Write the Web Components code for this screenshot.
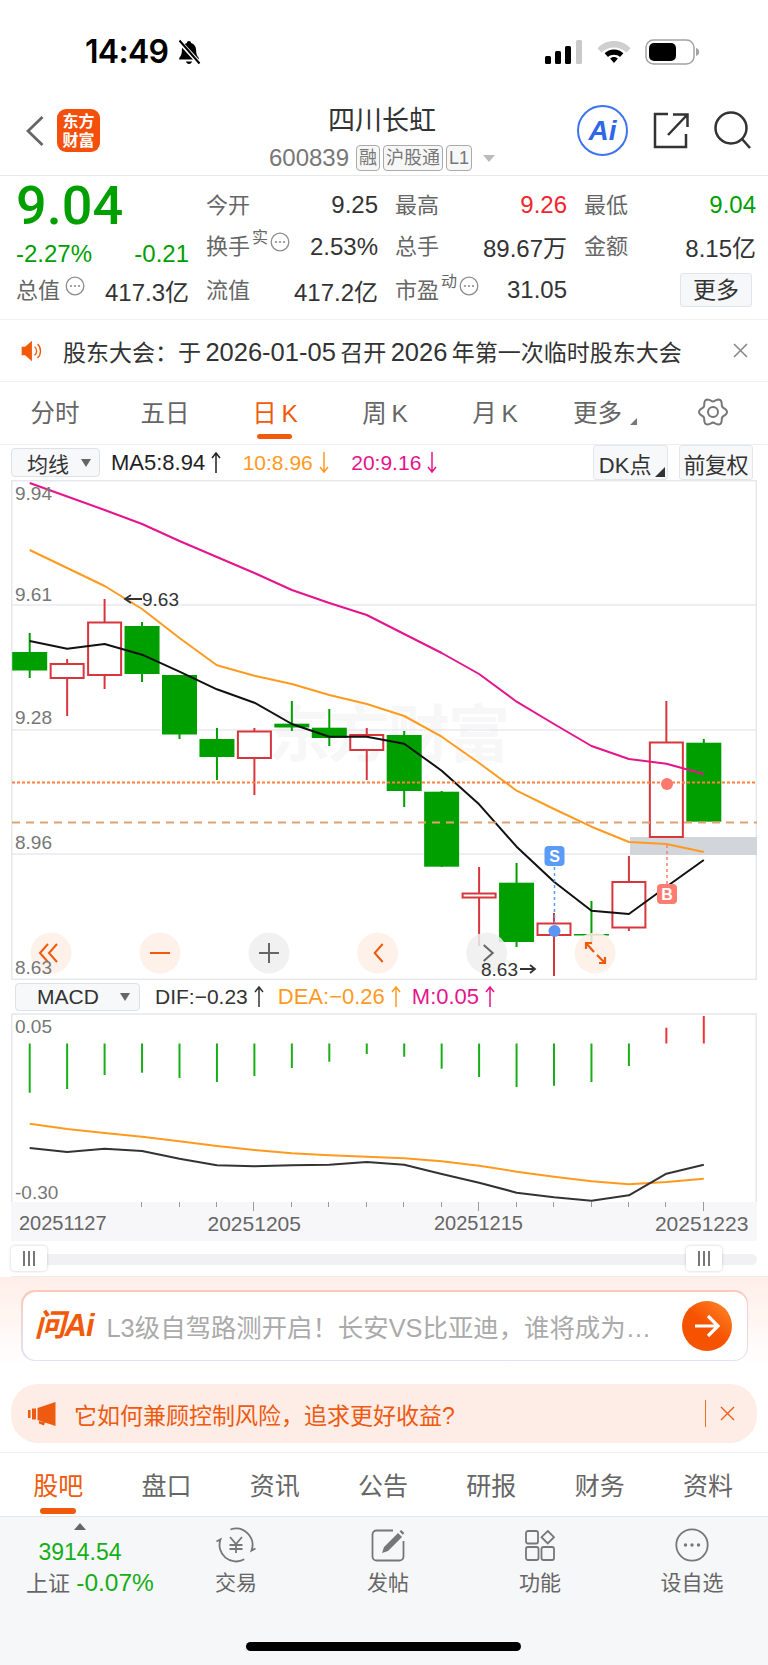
<!DOCTYPE html>
<html lang="zh">
<head>
<meta charset="utf-8">
<title>四川长虹</title>
<style>
  html, body {
    margin: 0;
    width: 768px;
    height: 1665px;
    overflow: hidden;
    background: #fff;
    font-family: "Liberation Sans", "Noto Sans CJK SC", sans-serif;
    color: #333;
  }
</style>
</head>
<body>
<status-bar></status-bar>
<stock-header name="四川长虹" code="600839"></stock-header>
<quote-panel></quote-panel>
<notice-bar>股东大会：于 <b>2026-01-05</b> 召开 <b>2026</b> 年第一次临时股东大会</notice-bar>
<period-tabs></period-tabs>
<ma-toolbar></ma-toolbar>
<kline-chart></kline-chart>
<macd-toolbar></macd-toolbar>
<macd-chart></macd-chart>
<date-axis></date-axis>
<range-slider></range-slider>
<ask-ai>L3级自驾路测开启！长安VS比亚迪，谁将成为…</ask-ai>
<promo-banner>它如何兼顾控制风险，追求更好收益?</promo-banner>
<section-tabs></section-tabs>
<bottom-dock></bottom-dock>

<script>
const GREEN = "#009f00";
const RED = "#d8363d";
const ORANGE = "#f05a0a";
const STEP = 37.45;
const barX = (i) => 29.7 + i * STEP;

function tallArrow(dir, color) {
  const d = dir === "up" ? "M5 22V2M1 7l4-5 4 5" : "M5 1v20M1 16l4 5 4-5";
  return `<svg width="10" height="23" viewBox="0 0 10 23" fill="none" stroke="${color}" stroke-width="1.5" style="margin-left:6px;flex:none"><path d="${d}"/></svg>`;
}

function dotsIcon(size) {
  return `<svg width="${size}" height="${size}" viewBox="0 0 20 20" fill="none" stroke="#8d8d8d" stroke-width="1.3"><circle cx="10" cy="10" r="8.8"/><g fill="#8d8d8d" stroke="none"><circle cx="6" cy="10" r="1.1"/><circle cx="10" cy="10" r="1.1"/><circle cx="14" cy="10" r="1.1"/></g></svg>`;
}

// six soft lobes, flat side up
function gearPath() {
  const pts = [];
  for (let i = 0; i < 72; i++) {
    const a = i * 5 * Math.PI / 180;
    const r = 12.3 + 1.7 * Math.cos(6 * a);
    pts.push((15 + r * Math.cos(a)).toFixed(2) + " " + (15 + r * Math.sin(a)).toFixed(2));
  }
  return "M" + pts.join("L") + "Z";
}

class StatusBar extends HTMLElement {
  connectedCallback() {
    this.attachShadow({ mode: "open" }).innerHTML = `
      <style>
        :host { display: flex; height: 100px; box-sizing: border-box; padding: 4px 68px 0 85px; align-items: center; justify-content: space-between; color: #000; }
        .left, .right { display: flex; align-items: center; }
        .time { font: 600 32px/1 Inter, "Liberation Sans", sans-serif; letter-spacing: -0.7px; }
        .left svg { margin-left: 8px; }
        .right svg + svg { margin-left: 13px; }
      </style>
      <div class="left">
        <span class="time">14:49</span>
        <svg width="26" height="26" viewBox="0 0 26 26">
          <path d="M13 2c1.2 0 2 .9 2.1 1.9 3.4 1 5 3.7 5 7 0 4.200 1 6 2.700 8v1.600H3.200V19c1.700-2 2.700-3.800 2.700-8 0-3.300 1.600-6 5-7C11 2.900 11.800 2 13 2zM10 22.500h6c-.3 1.500-1.500 2.500-3 2.500s-2.700-1-3-2.500z" fill="#000"/>
          <path d="M3 2l21 23" stroke="#fff" stroke-width="4.500"/>
          <path d="M3.500 1.500l20 23" stroke="#000" stroke-width="2"/>
        </svg>
      </div>
      <div class="right">
        <svg width="38" height="24" viewBox="0 0 38 24">
          <rect x="0" y="16" width="6" height="8" rx="1.500" fill="#000"/>
          <rect x="10" y="11" width="6" height="13" rx="1.500" fill="#000"/>
          <rect x="20" y="6" width="6" height="18" rx="1.500" fill="#000"/>
          <rect x="31" y="0" width="6" height="24" rx="1.500" fill="#c9c9c9"/>
        </svg>
        <svg width="36" height="24" viewBox="0 0 36 24">
          <path d="M18 7.500c-5 0-9.300 2-12.600 5L1.500 8.200C6 3.500 11.700 1 18 1s12 2.500 16.500 7.200l-3.900 4.300c-3.300-3-7.600-5-12.600-5z" fill="#cfcfcf"/>
          <path d="M18 9.500c3.800 0 7 1.400 9.400 3.700l-3.400 3.800c-1.600-1.400-3.600-2.200-6-2.200s-4.400.8-6 2.200l-3.400-3.800C11 10.900 14.200 9.500 18 9.500zM18 17c1.600 0 2.900.6 3.900 1.500L18 23l-3.900-4.500c1-.9 2.300-1.500 3.900-1.500z" fill="#000"/>
        </svg>
        <svg width="55" height="26" viewBox="0 0 55 26">
          <rect x="1" y="1" width="48" height="24" rx="7.500" fill="none" stroke="#a3a3a3" stroke-width="1.500"/>
          <rect x="4" y="4" width="27" height="18" rx="5" fill="#000"/>
          <path d="M51 9c2 .6 3.200 2.200 3.200 4s-1.200 3.400-3.200 4z" fill="#a3a3a3"/>
        </svg>
      </div>`;
  }
}
customElements.define("status-bar", StatusBar);

class StockHeader extends HTMLElement {
  connectedCallback() {
    this.attachShadow({ mode: "open" }).innerHTML = `
      <style>
        :host { display: grid; grid-template-columns: 1fr auto 1fr; height: 76px; box-sizing: border-box; border-bottom: 1.5px solid #e8e8e8; }
        .left { display: flex; align-items: center; padding: 0 0 14px 26px; }
        .logo { width: 43px; height: 43px; margin-left: 13px; border-radius: 9px; background: #f4500c; color: #fff; font-size: 16px; font-weight: 700; line-height: 19px; text-align: center; display: flex; align-items: center; justify-content: center; }
        .mid { display: flex; flex-direction: column; align-items: center; padding-top: 5px; transform: translateX(-2px); }
        .name { font-size: 27px; line-height: 32px; color: #333; }
        .sub { display: flex; align-items: center; margin-top: 8px; color: #777; font-size: 24px; line-height: 26px; }
        .tag { font-size: 18px; line-height: 24px; border: 1px solid #aaa; border-radius: 4px; background: #f7f7f7; color: #777; padding: 0 2px; margin-left: 3px; }
        .tag.first { margin-left: 7px; }
        .caret { width: 0; height: 0; border: 6px solid transparent; border-top: 7px solid #bbb; border-bottom: 0; margin-left: 11px; }
        .right { display: flex; justify-content: flex-end; align-items: center; padding: 0 15px 15px 0; }
        .ai { width: 47px; height: 47px; border: 2.500px solid #3d74ee; border-radius: 50%; color: #2f66ea; font: italic 700 28px/47px "Liberation Sans", sans-serif; text-align: center; position: relative; }
        .right svg { margin-left: 25px; }
      </style>
      <div class="left">
        <svg width="18" height="30" viewBox="0 0 18 30" fill="none" stroke="#666" stroke-width="2.800"><path d="M16.500 1L2 15l14.500 14"/></svg>
        <div class="logo">东方<br>财富</div>
      </div>
      <div class="mid">
        <div class="name">${this.getAttribute("name")}</div>
        <div class="sub">${this.getAttribute("code")}
          <span class="tag first">融</span><span class="tag">沪股通</span><span class="tag">L1</span><span class="caret"></span>
        </div>
      </div>
      <div class="right">
        <div class="ai">Ai</div>
        <svg width="36" height="37" viewBox="0 0 36 37" fill="none" stroke="#333" stroke-width="2.500"><path d="M15 2H2v33h31V22M15 23L34 3M20 2.500h14.500V15"/></svg>
        <svg style="margin-left:24px" width="40" height="38" viewBox="0 0 40 38" fill="none" stroke="#333" stroke-width="2.500"><circle cx="18" cy="17" r="15.500"/><path d="M29 28l8 9"/></svg>
      </div>`;
  }
}
customElements.define("stock-header", StockHeader);

class QuotePanel extends HTMLElement {
  connectedCallback() {
    const cell = (label, value, color, note) => `
      <div class="cell"><span class="label">${label}${note ? `<sup>${note}</sup>` : ""}${note !== undefined ? dotsIcon(20) : ""}</span><span class="value" style="color:${color || "#333"}">${value}</span></div>`;
    this.attachShadow({ mode: "open" }).innerHTML = `
      <style>
        :host { display: grid; grid-template-columns: 173px 172px 172px 172px; column-gap: 17px; grid-template-rows: 42px 41px 46px; padding: 8px 0 7px 16px; height: 144px; box-sizing: border-box; border-bottom: 1.5px solid #f0f0f0; }
        .cell { display: flex; justify-content: space-between; align-items: center; }
        .label { display: flex; align-items: center; color: #666; font-size: 22px; margin-bottom: 5px; position: relative; }
        sup { font-size: 16px; line-height: 16px; align-self: flex-start; margin: 2px 1px 0 2px; }
        .label svg { align-self: flex-start; margin: 4px 0 0 1px; }
        .label svg:first-child { margin-left: 5px; }
        .value { font-size: 24px; color: #333; }
        .price { color: ${GREEN}; font: 500 54px/44px Roboto, "Liberation Sans", sans-serif; }
        .chg { color: ${GREEN}; font-size: 24px; position: relative; top: 7px; }
        .more { justify-self: end; margin-right: 4px; width: 72px; height: 34px; box-sizing: border-box; align-self: center; background: #f6f7f9; border: 1px solid #e2e4e8; border-radius: 3px; font-size: 23px; line-height: 32px; text-align: center; color: #333; }
      </style>
      <div class="price">9.04</div>
      ${cell("今开", "9.25")}${cell("最高", "9.26", "#f0262e")}${cell("最低", "9.04", GREEN)}
      <div class="cell chg"><span>-2.27%</span><span>-0.21</span></div>
      ${cell("换手", "2.53%", "", "实")}${cell("总手", "89.67万")}${cell("金额", "8.15亿")}
      ${cell("总值", "417.3亿", "", "")}${cell("流值", "417.2亿")}${cell("市盈", "31.05", "", "动")}
      <div class="more">更多</div>`;
  }
}
customElements.define("quote-panel", QuotePanel);

class NoticeBar extends HTMLElement {
  connectedCallback() {
    this.attachShadow({ mode: "open" }).innerHTML = `
      <style>
        :host { display: flex; align-items: center; height: 62px; box-sizing: border-box; padding: 0 20px 0 20px; border-bottom: 1.5px solid #f0f0f0; font-size: 23px; color: #333; }
        .text { flex: 1; margin-left: 20px; white-space: nowrap; word-spacing: -2px; }
        ::slotted(b) { font-weight: 400; font-size: 25.500px; }
      </style>
      <svg width="23" height="24" viewBox="0 0 23 28"><path d="M0 9h4l8-7v24l-8-7H0z" fill="${ORANGE}"/><path d="M15 9c1.800 1.200 2.500 3 2.500 5s-.7 3.800-2.500 5M18.500 6c2.500 2 3.500 5 3.500 8s-1 6-3.500 8" fill="none" stroke="${ORANGE}" stroke-width="1.600"/></svg>
      <span class="text"><slot></slot></span>
      <svg width="15" height="15" viewBox="0 0 15 15" fill="none" stroke="#888" stroke-width="1.600"><path d="M1 1l13 13M14 1L1 14"/></svg>`;
  }
}
customElements.define("notice-bar", NoticeBar);

class PeriodTabs extends HTMLElement {
  connectedCallback() {
    const tabs = ["分时", "五日", "日 K", "周 K", "月 K"];
    this.attachShadow({ mode: "open" }).innerHTML = `
      <style>
        :host { display: grid; grid-template-columns: repeat(7, 110px); height: 63px; box-sizing: border-box; border-bottom: 1.5px solid #eeeeee; font-size: 24.500px; color: #666; }
        .tab { display: flex; align-items: center; justify-content: center; padding-bottom: 3px; position: relative; white-space: pre; }
        .on { color: ${ORANGE}; }
        .on::after { content: ""; position: absolute; left: 37px; top: 52px; width: 35px; height: 5px; border-radius: 3px; background: ${ORANGE}; }
        .more::after { content: ""; width: 0; height: 0; border-style: solid; border-width: 0 0 7px 7px; border-color: transparent transparent #777 transparent; margin: 20px 0 0 8px; }
        svg { margin-right: 4px; }
      </style>
      ${tabs.map((t, i) => `<div class="tab${i === 2 ? " on" : ""}">${t.replace(" ", "\u2009")}</div>`).join("")}
      <div class="tab more">更多</div>
      <div class="tab"><svg width="30" height="30" viewBox="0 0 30 30" fill="none" stroke="#777" stroke-width="2"><path d="${gearPath()}"/><circle cx="15" cy="15" r="5"/></svg></div>`;
  }
}
customElements.define("period-tabs", PeriodTabs);

class SelectBox extends HTMLElement {
  connectedCallback() {
    this.attachShadow({ mode: "open" }).innerHTML = `
      <style>
        :host { display: flex; align-items: center; justify-content: space-between; box-sizing: border-box; background: #f7f8fa; border: 1px solid #dfe1e6; border-radius: 4px; color: #333; font-size: 21px; }
        .caret { width: 0; height: 0; border: 5px solid transparent; border-top: 8px solid #666; border-bottom: 0; }
      </style>
      <slot></slot><span class="caret"></span>`;
  }
}
customElements.define("select-box", SelectBox);

class MaToolbar extends HTMLElement {
  connectedCallback() {
    this.attachShadow({ mode: "open" }).innerHTML = `
      <style>
        :host { display: flex; align-items: center; height: 35px; padding-left: 11px; font-size: 22px; white-space: nowrap; }
        select-box { width: 89px; height: 29px; padding: 0 8px 0 15px; }
        .ma { display: flex; align-items: center; }
        .btn { box-sizing: border-box; height: 35px; background: #f7f8fa; border: 1px solid #e4e6ea; border-radius: 3px; display: flex; align-items: center; font-size: 22px; color: #333; position: relative; }
        .dk { margin-left: 155.500px; width: 75px; padding-left: 5px; }
        .dk::after { content: ""; position: absolute; right: 2px; bottom: 2px; border-style: solid; border-width: 0 0 10px 10px; border-color: transparent transparent #333 transparent; }
        .fq { margin-left: 11px; width: 74px; justify-content: center; letter-spacing: -0.5px; }
      </style>
      <select-box>均线</select-box>
      <span class="ma" style="margin-left:11px;color:#222">MA5:8.94${tallArrow("up", "#222")}</span>
      <span class="ma" style="margin-left:21.500px;color:#ff9a1f;font-size:21px">10:8.96${tallArrow("down", "#ff9a1f")}</span>
      <span class="ma" style="margin-left:22.500px;color:#e5148c;font-size:21px">20:9.16${tallArrow("down", "#e5148c")}</span>
      <span class="btn dk">DK点</span>
      <span class="btn fq">前复权</span>`;
  }
}
customElements.define("ma-toolbar", MaToolbar);

const CANDLES = [
  ["g", 652, 670.5, 633, 678], ["r", 664, 678, 659, 716], ["r", 622.5, 675, 599, 689], ["g", 626, 674, 622, 682],
  ["g", 675, 734.5, 675, 739], ["g", 739, 757, 728, 780], ["r", 731.5, 758, 728, 795], ["g", 723.7, 727.5, 701, 731],
  ["g", 727.7, 738, 709, 746], ["r", 735, 750, 728, 780], ["g", 735, 791, 731, 807], ["g", 791.7, 866.7, 791, 867],
  ["r", 893.5, 897.5, 867, 946], ["g", 882.7, 942, 863, 947], ["r", 923.5, 935, 913, 976], ["g", 934, 935.5, 901, 945],
  ["r", 882, 927.5, 856, 931], ["r", 742.5, 837, 701, 742.5], ["g", 742.7, 821.7, 739, 743]
];
const MA5 = [641, 648.7, 644, 654.7, 671.7, 689.3, 702.7, 724, 736.7, 736.7, 743.7, 770.7, 804.3, 846.7, 881.7, 910.7, 914, 886.7, 860];
const MA10 = [550, 568, 586, 609, 638, 665.3, 675.7, 684, 695, 704, 716, 736.7, 763, 790.7, 809, 826.7, 842, 844, 852];
const MA20 = [483, 496.5, 510, 524, 541, 557, 573, 590, 603, 615, 634, 653, 674, 701.7, 724, 746, 759, 763.7, 774];
const line = (ys, color, w) => `<polyline fill="none" stroke="${color}" stroke-width="${w}" stroke-linejoin="round" points="${ys.map((y, i) => `${barX(i).toFixed(1)},${y}`).join(" ")}"/>`;

class KlineChart extends HTMLElement {
  connectedCallback() {
    const bars = CANDLES.map(([t, top, bot, wt, wb], i) => {
      const x = barX(i);
      const color = t === "g" ? GREEN : RED;
      const wick = `<path d="M${x} ${wt}V${wb}" stroke="${color}" stroke-width="2"/>`;
      return wick + (t === "g"
        ? `<rect x="${x - 17.5}" y="${top}" width="35" height="${bot - top}" fill="${color}"/>`
        : `<rect x="${x - 16.5}" y="${top}" width="33" height="${bot - top}" fill="#fff" stroke="${color}" stroke-width="2"/>`);
    }).join("");
    const grid = [605, 730, 854].map((y) => `<path d="M11 ${y}H757" stroke="#e9eaf0" stroke-width="1.500"/>`).join("");
    const labels = [["9.94", 500], ["9.61", 601], ["9.28", 724], ["8.96", 849]].map(([t, y]) => `<text x="15" y="${y}" class="axis">${t}</text>`).join("");
    const round = (cx, bg, inner) => `<circle cx="${cx}" cy="953" r="20.500" fill="${bg}" fill-opacity=".85"/><g fill="none" stroke="${bg === "#eeeeee" ? "#666" : ORANGE}" stroke-width="2" transform="translate(${cx} 953)">${inner}</g>`;
    this.attachShadow({ mode: "open" }).innerHTML = `
      <style>
        :host { display: block; margin: 0 11px; width: 746px; height: 500px; }
        svg { display: block; }
        text { font-family: "Liberation Sans", "Noto Sans CJK SC", sans-serif; }
        .axis { font-size: 19px; fill: #777; }
        .note { font-size: 19px; fill: #333; }
        .mark { font-size: 16px; font-weight: 700; fill: #fff; text-anchor: middle; }
      </style>
      <svg width="746" height="500" viewBox="11 480 746 500">
        <rect x="11.750" y="480.750" width="744.500" height="498.500" fill="#fff" stroke="#e6e8ee" stroke-width="1.500"/>
        <text x="268" y="757" font-size="62" font-weight="700" fill="#f7f7f7" letter-spacing="-2">东方财富</text>
        ${grid}
        <rect x="630" y="837" width="127" height="18" fill="#d2d5da"/>
        ${bars}
        ${line(MA20, "#e5148c", 2)}
        ${line(MA10, "#ff9a1f", 2)}
        ${line(MA5, "#111", 2)}
        <path d="M12 782.500H757" stroke="#ff7f3f" stroke-width="2" stroke-dasharray="3 2"/>
        <path d="M12 822.500H757" stroke="#dfa36d" stroke-width="2" stroke-dasharray="8 6"/>
        ${labels}
        <path d="M142 599H125M131 595l-6 4 6 4" fill="none" stroke="#333" stroke-width="1.800"/>
        <text x="142" y="606" class="note">9.63</text>
        <path d="M554.500 867V923" stroke="#5a9bf8" stroke-width="1.500" stroke-dasharray="3 3"/>
        <rect x="544.500" y="846" width="20" height="20" rx="4" fill="#5a9bf8"/>
        <text x="554.500" y="862" class="mark">S</text>
        <circle cx="554.500" cy="931" r="6" fill="#5a94f4"/>
        <path d="M667 845V884" stroke="#ff7d70" stroke-width="1.500" stroke-dasharray="3 3"/>
        <rect x="657" y="884" width="20" height="20" rx="4" fill="#ff7d70"/>
        <text x="667" y="900" class="mark">B</text>
        <circle cx="667" cy="784" r="6" fill="#ff7a6d"/>
        ${round(51, "#fdeee6", `<path d="M-3-9l-8 9 8 9M6-9l-8 9 8 9"/>`)}
        ${round(160, "#fdeee6", `<path d="M-10 0H10"/>`)}
        ${round(269, "#eeeeee", `<path d="M-10 0H10M0-10V10"/>`)}
        ${round(377.700, "#fdeee6", `<path d="M5-9l-8 9 8 9"/>`)}
        ${round(486.700, "#eeeeee", `<path d="M-3-8l9 8-9 8"/>`)}
        ${round(595, "#fdeee6", `<path d="M-9-4V-10H-3M-9-10L-1-1M10 4V10H4M10 10L2 2" stroke-width="2.200"/>`)}
        <text x="481" y="976" class="note">8.63</text>
        <path d="M520 969H535M530 965l5 4-5 4" fill="none" stroke="#333" stroke-width="1.800"/>
        <text x="15" y="974" class="axis">8.63</text>
      </svg>`;
  }
}
customElements.define("kline-chart", KlineChart);

class MacdToolbar extends HTMLElement {
  connectedCallback() {
    this.attachShadow({ mode: "open" }).innerHTML = `
      <style>
        :host { display: flex; align-items: center; height: 33px; padding-left: 15px; font-size: 21px; white-space: nowrap; }
        select-box { width: 125px; height: 28px; padding: 0 9px 0 21px; letter-spacing: 0; }
        .v { display: flex; align-items: center; }
      </style>
      <select-box>MACD</select-box>
      <span class="v" style="margin-left:15px;color:#333">DIF:−0.23${tallArrow("up", "#333")}</span>
      <span class="v" style="margin-left:14px;color:#ff9a1f;font-size:22px">DEA:−0.26${tallArrow("up", "#ff9a1f")}</span>
      <span class="v" style="margin-left:11px;color:#e5148c;font-size:22px">M:0.05${tallArrow("up", "#e5148c")}</span>`;
  }
}
customElements.define("macd-toolbar", MacdToolbar);

const MACD_BARS = [1092.7, 1089, 1075, 1072.7, 1078, 1082, 1076, 1068, 1061.7, 1054, 1056.7, 1068.7, 1077, 1087, 1085.7, 1082, 1066, 1027.7, 1016];
const DEA = [341, 357, 369, 380, 394, 408, 420, 430, 436, 440, 445, 454, 467, 485, 500, 514, 523, 516, 506].map((y) => y / 3 + 1010);
const DIF = [414, 426, 416, 423, 446, 466, 469, 466, 464, 456, 464, 492, 518, 548, 562, 572, 556, 491, 464].map((y) => y / 3 + 1010);

class MacdChart extends HTMLElement {
  connectedCallback() {
    const bars = MACD_BARS.map((y, i) => `<path d="M${barX(i)} 1043.500V${y}" stroke="${y < 1043 ? "#f0323a" : "#17ae17"}" stroke-width="2"/>`).join("");
    this.attachShadow({ mode: "open" }).innerHTML = `
      <style>
        :host { display: block; margin: 0 11px; width: 746px; height: 189px; }
        svg { display: block; }
        text { font-size: 19px; fill: #777; font-family: "Liberation Sans", sans-serif; }
      </style>
      <svg width="746" height="189" viewBox="11 1013 746 189">
        <path d="M11.750 1202V1014h744.500V1202" fill="#fff" stroke="#e6e8ee" stroke-width="1.500"/>
        <text x="15" y="1033">0.05</text>
        ${bars}
        ${line(DEA, "#ff9a1f", 2)}
        ${line(DIF, "#333", 2)}
        <text x="15" y="1199">-0.30</text>
      </svg>`;
  }
}
customElements.define("macd-chart", MacdChart);

class DateAxis extends HTMLElement {
  connectedCallback() {
    const ticks = [];
    for (let i = 3; i < 19; i++) {
      const long = i === 6 || i === 12 || i === 18;
      ticks.push(`<i style="left:${(barX(i) - 12).toFixed(1)}px;height:${long ? 9 : 5}px"></i>`);
    }
    this.attachShadow({ mode: "open" }).innerHTML = `
      <style>
        :host { display: flex; align-items: center; box-sizing: border-box; margin: 0 11px; width: 746px; height: 39px; padding: 4px 0 0 8px; background: #f7f7fa; font-size: 20px; color: #666; position: relative; }
        i { position: absolute; top: 0; width: 1px; background: #999; }
      </style>
      ${ticks.join("")}
      <span>20251127</span>
      <span style="margin-left:101px;font-size:21px">20251205</span>
      <span style="margin-left:133px">20251215</span>
      <span style="margin-left:132px;font-size:21px">20251223</span>`;
  }
}
customElements.define("date-axis", DateAxis);

class RangeSlider extends HTMLElement {
  connectedCallback() {
    this.attachShadow({ mode: "open" }).innerHTML = `
      <style>
        :host { display: flex; justify-content: space-between; align-items: center; box-sizing: border-box; height: 36px; margin: 0 0 0 11px; padding-right: 46px; border-bottom: 1.5px solid #eeeeee; position: relative; }
        .track { position: absolute; left: 0; right: 11px; top: 13px; height: 11px; border-radius: 6px; background: #f1f1f3; }
        .grip { position: relative; width: 36px; height: 25px; background: #fff; border-radius: 4px; box-shadow: 0 0 3px rgba(0,0,0,.22); display: flex; align-items: center; justify-content: center; gap: 3px; }
        .grip i { width: 2px; height: 15px; background: #777; }
      </style>
      <div class="track"></div>
      <div class="grip"><i></i><i></i><i></i></div>
      <div class="grip"><i></i><i></i><i></i></div>`;
  }
}
customElements.define("range-slider", RangeSlider);

class AskAi extends HTMLElement {
  connectedCallback() {
    this.attachShadow({ mode: "open" }).innerHTML = `
      <style>
        :host { display: block; box-sizing: border-box; height: 95px; padding: 13px 20px 0 21px; background: linear-gradient(#ffeee8, #fff 95%); }
        .box { box-sizing: border-box; height: 71px; border-radius: 14px; padding: 1.500px; background: linear-gradient(#ffc7bb, #dfe4f6); }
        .in { display: flex; align-items: center; height: 100%; border-radius: 13px; background: #fff; padding: 0 15px 0 12px; }
        .logo { font: italic 700 31px/1 "Liberation Sans", "Noto Sans CJK SC", sans-serif; color: ${ORANGE}; letter-spacing: -1px; white-space: nowrap; }
        .text { flex: 1; margin-left: 13px; font-size: 25.400px; color: #aaa; white-space: nowrap; }
        .go { width: 50px; height: 50px; border-radius: 50%; background: linear-gradient(40deg, #f65300 50%, #ff8b2d); display: flex; align-items: center; justify-content: center; flex: none; }
      </style>
      <div class="box"><div class="in">
        <span class="logo">问Ai</span>
        <span class="text"><slot></slot></span>
        <span class="go"><svg width="26" height="24" viewBox="0 0 26 24" fill="none" stroke="#fff" stroke-width="3.200"><path d="M1 12h23M14 2l10 10-10 10"/></svg></span>
      </div></div>`;
  }
}
customElements.define("ask-ai", AskAi);

class PromoBanner extends HTMLElement {
  connectedCallback() {
    this.attachShadow({ mode: "open" }).innerHTML = `
      <style>
        :host { display: block; box-sizing: border-box; height: 81px; padding: 12px 11px 0; border-bottom: 1.5px solid #eeeeee; }
        .pill { display: flex; align-items: center; height: 59px; padding: 0 22px 0 17px; border-radius: 27px; background: #fdede6; color: #ee5a10; font-size: 23px; }
        .text { flex: 1; margin-left: 18px; }
        .sep { width: 1px; height: 27px; background: #e8702f; margin-right: 14px; }
      </style>
      <div class="pill">
        <svg width="28" height="24" viewBox="0 0 28 24" fill="#ee5a10"><path d="M0 8h2.500v8H0zM4 6.500h4v11h-4zM9.500 6L27.500 0v24L9.500 18zM11 19l6 1.500-1 3-5-2z"/></svg>
        <span class="text"><slot></slot></span>
        <span class="sep"></span>
        <svg width="15" height="15" viewBox="0 0 15 15" fill="none" stroke="#ee5a10" stroke-width="1.300"><path d="M1 1l13 13M14 1L1 14"/></svg>
      </div>`;
  }
}
customElements.define("promo-banner", PromoBanner);

class SectionTabs extends HTMLElement {
  connectedCallback() {
    const tabs = ["股吧", "盘口", "资讯", "公告", "研报", "财务", "资料"];
    this.attachShadow({ mode: "open" }).innerHTML = `
      <style>
        :host { display: grid; grid-template-columns: repeat(7, 108.300px); height: 64px; box-sizing: border-box; padding: 0 6px 0 4px; border-bottom: 1.5px solid #e6e6e6; font-size: 25px; color: #666; }
        div { display: flex; align-items: center; justify-content: center; padding-bottom: 2px; position: relative; }
        .on { color: ${ORANGE}; }
        .on::after { content: ""; position: absolute; left: 36px; top: 55px; width: 36px; height: 6px; border-radius: 3px; background: ${ORANGE}; }
      </style>
      ${tabs.map((t, i) => `<div class="${i ? "" : "on"}">${t}</div>`).join("")}`;
  }
}
customElements.define("section-tabs", SectionTabs);

class BottomDock extends HTMLElement {
  connectedCallback() {
    const stroke = `fill="none" stroke="#777" stroke-width="1.800"`;
    const item = (icon, label) => `<div class="item"><span class="icon">${icon}</span><span class="label">${label}</span></div>`;
    this.attachShadow({ mode: "open" }).innerHTML = `
      <style>
        :host { display: block; box-sizing: border-box; height: 148px; background: #f6f7f9; position: relative; }
        .row { display: grid; grid-template-columns: 160px repeat(4, 152px); }
        .index { display: flex; flex-direction: column; align-items: center; padding-top: 6px; }
        .tri { width: 0; height: 0; border: 6.500px solid transparent; border-bottom: 7px solid #666; border-top: 0; }
        .num { color: #17ae17; font-size: 23px; line-height: 28px; margin-top: 8px; }
        .pct { font-size: 22px; line-height: 26px; color: #666; margin: 4px 0 0 20px; white-space: nowrap; }
        .pct b { font-weight: 400; font-size: 24.500px; color: #17ae17; }
        .item { display: flex; flex-direction: column; align-items: center; padding-top: 7px; }
        .icon { height: 42px; display: flex; align-items: center; }
        .label { font-size: 21px; line-height: 26px; margin-top: 4px; color: #666; }
        .tray { position: absolute; left: 246px; top: 125px; width: 275px; height: 9px; border-radius: 5px; background: #000; }
      </style>
      <div class="row">
        <div class="index">
          <span class="tri"></span>
          <span class="num">3914.54</span>
          <span class="pct">上证 <b>-0.07%</b></span>
        </div>
        ${item(`<svg width="42" height="42" viewBox="0 0 42 42" ${stroke}><path d="M15.400 5.500A16.500 16.500 0 0 1 36.500 26.600L40.500 24.500M29.250 35.300A16.500 16.500 0 0 1 5.500 15.400L1.500 17.500"/><path d="M15 13l6 7 6-7M14.500 21h13M14.500 25h13M21 20v9"/></svg>`, "交易")}
        ${item(`<svg width="34" height="33" viewBox="0 0 34 33" ${stroke}><path d="M22 1.500H5.500a4 4 0 0 0-4 4v22a4 4 0 0 0 4 4h23a4 4 0 0 0 4-4V12"/><path d="M11 24l2-6L27 4l4 4L17 22zM28.500 2.500l1.800-1.500 3 3-1.500 1.800z" fill="#777" stroke="none"/></svg>`, "发帖")}
        ${item(`<svg width="30" height="31" viewBox="0 0 30 31" ${stroke}><rect x="1" y="1" width="12" height="12.500" rx="2"/><rect x="1" y="17" width="12.500" height="13" rx="2"/><rect x="16.500" y="17" width="12.500" height="13" rx="2"/><path d="M22.750 1L29 7.200 22.750 13.500 16.500 7.200z"/></svg>`, "功能")}
        ${item(`<svg width="34" height="34" viewBox="0 0 34 34" fill="none"><circle cx="17" cy="17" r="15.700" stroke="#777" stroke-width="1.800"/><g fill="#777"><circle cx="10.500" cy="17" r="1.700"/><circle cx="17" cy="17" r="1.700"/><circle cx="23.500" cy="17" r="1.700"/></g></svg>`, "设自选")}
      </div>
      <div class="tray"></div>`;
  }
}
customElements.define("bottom-dock", BottomDock);
</script>
</body>
</html>
